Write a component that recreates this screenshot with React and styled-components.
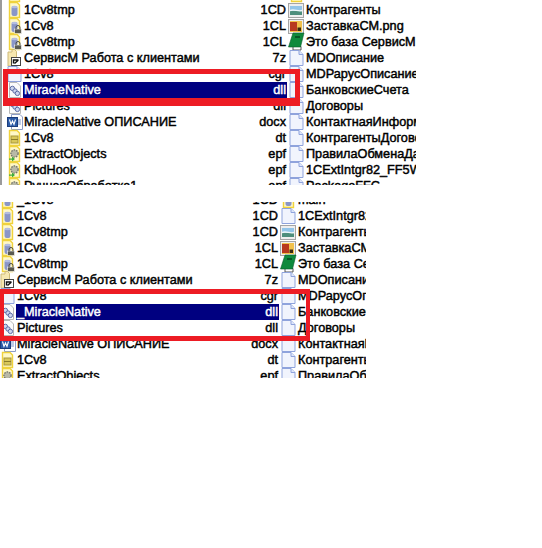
import React from 'react'
import styled, { createGlobalStyle } from 'styled-components'

const GlobalStyle = createGlobalStyle`
  html, body { margin: 0; padding: 0; background: #fff; }
  body { width: 542px; height: 548px; overflow: hidden; font-family: "Liberation Sans", Arial, sans-serif; }
`

const PageIcon = () => (
  <svg width="16" height="16" viewBox="0 0 16 16">
    <path d="M1 .5H10L14 4.5V15.5H1Z" fill="#f1f4fd" stroke="#8fa3dc" />
    <path d="M10 .5V4.5H14" fill="#dfe6fa" stroke="#8fa3dc" />
  </svg>
)

const DbIcon = ({ lock }) => (
  <svg width="16" height="16" viewBox="0 0 16 16">
    <path d="M2.5 .5H10L12.5 3V15.5H2.5Z" fill="#fff8c8" stroke="#f0d23c" strokeWidth="1.4" />
    <rect x="4.5" y="4" width="6" height="10" rx="2" fill="#8a96c8" />
    <ellipse cx="7.5" cy="5" rx="3" ry="1.3" fill="#b4bde0" />
    {lock && (
      <g>
        <rect x="7.5" y="11" width="7" height="4.5" fill="#5a5a50" stroke="#fff" strokeWidth=".6" />
        <path d="M9 11V9.5a2 2 0 0 1 4 0V11" fill="none" stroke="#4a4a40" />
      </g>
    )}
  </svg>
)

const ArchiveIcon = () => (
  <svg width="16" height="18" viewBox="0 0 16 18">
    <path d="M1 3H5V0.5H7.5L9.5 2.5V17H1Z" fill="#f6e7b0" stroke="#cdb978" />
    <rect x="4.5" y="8.5" width="9" height="8" fill="#fff" stroke="#444" />
    <path d="M6.5 14.5V11H11.5M11.5 11L7.5 14.5" fill="none" stroke="#111" strokeWidth="1.5" />
  </svg>
)

const DllIcon = () => (
  <svg width="16" height="16" viewBox="0 0 16 16">
    <path d="M2.5 .5H10L13.5 4V15.5H2.5Z" fill="#fbfbfb" stroke="#b8b8b8" />
    <g fill="#cdd6ee" stroke="#52639f" strokeWidth=".9">
      <circle cx="5.4" cy="6.4" r="2.2" />
      <circle cx="8" cy="9" r="2.2" />
      <circle cx="10.4" cy="11.4" r="2.2" />
    </g>
  </svg>
)

const WordIcon = () => (
  <svg width="16" height="16" viewBox="0 0 16 16">
    <path d="M4.5 .5H13L15.5 3V15.5H4.5Z" fill="#fff" stroke="#8d9cc6" />
    <rect x=".5" y="3.5" width="10" height="9" fill="#2b5ba8" stroke="#1c3d7c" />
    <path d="M2.5 5.5L4 10.5L5.5 7L7 10.5L8.5 5.5" fill="none" stroke="#fff" strokeWidth="1.1" />
    <path d="M11 6H14M11 8H14M11 10H14" stroke="#7f99cf" />
  </svg>
)

const DtIcon = () => (
  <svg width="16" height="16" viewBox="0 0 16 16">
    <path d="M2.5 .5H10L12.5 3V15.5H2.5Z" fill="#fff8c8" stroke="#f0d23c" strokeWidth="1.4" />
    <rect x="4" y="6" width="7" height="7" fill="#d9c85a" stroke="#a9983a" />
    <path d="M4 9.5H11" stroke="#8a7b2a" />
  </svg>
)

const EpfIcon = () => (
  <svg width="16" height="16" viewBox="0 0 16 16">
    <path d="M2.5 .5H10L12.5 3V15.5H2.5Z" fill="#fff8c8" stroke="#f0d23c" strokeWidth="1.4" />
    <circle cx="7.5" cy="7.5" r="3.6" fill="#b9b9a6" stroke="#77776a" strokeDasharray="1.6 1" strokeWidth="1.4" />
    <path d="M2 12.5H5V10.5L8 13L5 15.5V13.8H2Z" fill="#3fae3a" />
  </svg>
)

const PictureIcon = () => (
  <svg width="17" height="16" viewBox="0 0 17 16">
    <rect x=".5" y="1.5" width="15" height="14" fill="#eeeeee" stroke="#a5a5a5" />
    <rect x="2" y="4" width="12" height="5" fill="#93c5e8" />
    <rect x="2" y="9" width="12" height="4" fill="#4d8e7c" />
    <path d="M2 8.6C6 6.5 10 10 14 8.5" fill="none" stroke="#eef6f8" strokeWidth="1.4" />
  </svg>
)

const PngIcon = () => (
  <svg width="17" height="16" viewBox="0 0 17 16">
    <rect x=".5" y="1.5" width="15" height="14" fill="#eeeeee" stroke="#a5a5a5" />
    <rect x="2" y="3" width="12" height="11" fill="#f2c14b" />
    <rect x="2" y="4" width="7" height="9" fill="#b8391f" />
    <rect x="9.5" y="9.5" width="3.5" height="3.5" fill="#3a2a12" />
  </svg>
)

const BookIcon = () => (
  <svg width="17" height="18" viewBox="0 0 17 18">
    <path d="M5 13.5H13V17H5Z" fill="#fff" stroke="#555" />
    <path d="M5 0H16L12.5 14H0.5Z" fill="#0f8a3c" stroke="#0a5c2a" strokeWidth=".6" />
    <path d="M7 4H12" stroke="#063e1c" strokeWidth="1.4" />
  </svg>
)

const icons = {
  page: <PageIcon />,
  db: <DbIcon />,
  lock: <DbIcon lock />,
  archive: <ArchiveIcon />,
  dll: <DllIcon />,
  word: <WordIcon />,
  dt: <DtIcon />,
  epf: <EpfIcon />,
  picture: <PictureIcon />,
  png: <PngIcon />,
  book: <BookIcon />,
}

const topRows = [
  ['db', '1Cv8', '1CD', 'db', 'main'],
  ['db', '1Cv8tmp', '1CD', 'picture', 'Контрагенты'],
  ['lock', '1Cv8', '1CL', 'png', 'ЗаставкаСМ.png'],
  ['lock', '1Cv8tmp', '1CL', 'book', 'Это база СервисМ'],
  ['archive', 'СервисМ Работа с клиентами', '7z', 'page', 'MDОписание'],
  ['page', '1Cv8', 'cgr', 'page', 'MDРарусОписание'],
  ['dll', 'MiracleNative', 'dll', 'page', 'БанковскиеСчета', true],
  ['dll', 'Pictures', 'dll', 'page', 'Договоры'],
  ['word', 'MiracleNative ОПИСАНИЕ', 'docx', 'page', 'КонтактнаяИнформация'],
  ['dt', '1Cv8', 'dt', 'page', 'КонтрагентыДоговоры'],
  ['epf', 'ExtractObjects', 'epf', 'page', 'ПравилаОбменаДанными'],
  ['epf', 'KbdHook', 'epf', 'page', '1CExtIntgr82_FF5W'],
  ['epf', 'РучнаяОбработка1', 'epf', 'page', 'PackageFFC'],
]

const bottomRows = [
  ['db', '_1Cv8', '1CD', 'db', 'main'],
  ['db', '1Cv8', '1CD', 'page', '1CExtIntgr82_FF5W'],
  ['db', '1Cv8tmp', '1CD', 'picture', 'Контрагенты'],
  ['lock', '1Cv8', '1CL', 'png', 'ЗаставкаСМ.png'],
  ['lock', '1Cv8tmp', '1CL', 'book', 'Это база СервисМ'],
  ['archive', 'СервисМ Работа с клиентами', '7z', 'page', 'MDОписание'],
  ['page', '1Cv8', 'cgr', 'page', 'MDРарусОписание'],
  ['dll', '_MiracleNative', 'dll', 'page', 'БанковскиеСчета', true],
  ['dll', 'Pictures', 'dll', 'page', 'Договоры'],
  ['word', 'MiracleNative ОПИСАНИЕ', 'docx', 'page', 'КонтактнаяИнформация'],
  ['dt', '1Cv8', 'dt', 'page', 'КонтрагентыДоговоры'],
  ['epf', 'ExtractObjects', 'epf', 'page', 'ПравилаОбменаДанными'],
]

const Page = styled.div`
  position: relative;
  width: 542px;
  height: 548px;
  background: #fff;
  display: flex;
  flex-direction: column;
  gap: 17px;
`

const Panel = styled.div`
  width: ${({ width }) => width}px;
  height: ${({ height }) => height}px;
  overflow: hidden;
  box-sizing: border-box;
  border-left: ${({ edge }) => (edge ? '2px solid #9b9b9b' : '0')};
`

const Rows = styled.div`
  margin-top: ${({ shift }) => shift}px;
`

const Row = styled.div`
  height: 16px;
  display: grid;
  grid-template-columns: ${({ columns }) => columns};
  align-items: center;
`

const IconCell = styled.div`
  height: 16px;
  display: flex;
  align-items: center;
  justify-content: flex-end;
  svg { display: block; flex: none; overflow: visible; }
`

const Name = styled.div`
  height: 16px;
  line-height: 16px;
  font-size: 12.7px;
  color: #000;
  white-space: nowrap;
  overflow: hidden;
  -webkit-text-stroke: 0.45px currentColor;
  padding-left: 1px;
`

const Main = styled(Name)`
  display: flex;
  justify-content: space-between;
  background: ${({ selected }) => (selected ? '#000080' : 'transparent')};
  color: ${({ selected }) => (selected ? '#fff' : '#000')};
  padding-right: 1px;
`

const Highlight = styled.div`
  position: absolute;
  left: ${({ x }) => x}px;
  top: ${({ y }) => y}px;
  width: ${({ w }) => w}px;
  height: ${({ h }) => h}px;
  box-sizing: border-box;
  border: solid #ed1c24;
  border-width: ${({ thick }) => thick};
`

const FileList = ({ rows, columns, shift }) => (
  <Rows shift={shift}>
    {rows.map(([icon, name, ext, icon2, name2, selected], i) => (
      <Row key={i} columns={columns}>
        <IconCell>{icons[icon]}</IconCell>
        <Main selected={selected}>
          <span>{name}</span>
          <span>{ext}</span>
        </Main>
        <IconCell>{icons[icon2]}</IconCell>
        <Name>{name2}</Name>
      </Row>
    ))}
  </Rows>
)

export default function App() {
  return (
    <Page>
      <GlobalStyle />
      <Panel width={416} height={185} edge>
        <FileList rows={topRows} columns="21px 264px 18px 111px" shift={-14} />
      </Panel>
      <Panel width={366} height={176}>
        <FileList rows={bottomRows} columns="16px 263px 18px 69px" shift={-10} />
      </Panel>
      <Highlight x={3} y={69} w={297} h={37} thick="5px 5px 8px" />
      <Highlight x={0} y={289} w={310} h={52} thick="5px 4px" />
    </Page>
  )
}
